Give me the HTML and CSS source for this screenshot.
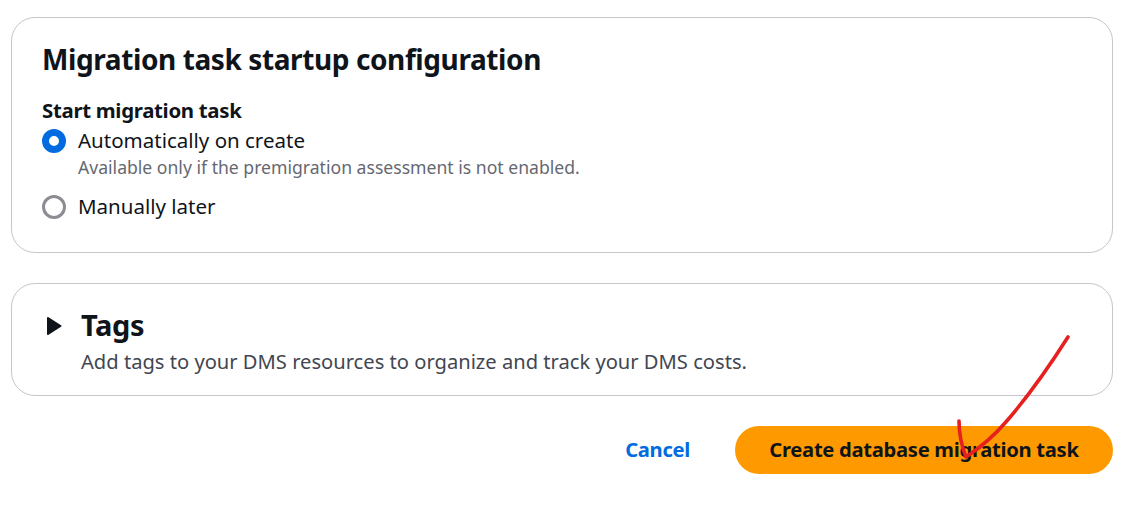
FILE: index.html
```html
<!DOCTYPE html>
<html lang="en">
<head>
<meta charset="utf-8">
<title>Create database migration task</title>
<link rel="stylesheet" href="styles.css">
</head>
<body>
<main class="page">
  <section class="card card-config">
    <h2 class="card-title">Migration task startup configuration</h2>
    <div class="field-label">Start migration task</div>
    <div class="radio-row radio-first">
      <span class="radio radio-on"></span>
      <div class="radio-text">
        <div class="radio-label">Automatically on create</div>
        <div class="radio-desc">Available only if the premigration assessment is not enabled.</div>
      </div>
    </div>
    <div class="radio-row radio-second">
      <span class="radio radio-off"></span>
      <div class="radio-text">
        <div class="radio-label">Manually later</div>
      </div>
    </div>
  </section>
  <section class="card card-tags">
    <svg class="caret" width="16" height="20" viewBox="0 0 16 20"><path d="M2 2 L14.5 10 L2 18 Z" fill="#0f141a" stroke="#0f141a" stroke-width="2" stroke-linejoin="round"/></svg>
    <div class="tags-text">
      <h2 class="tags-title">Tags</h2>
      <div class="tags-desc">Add tags to your DMS resources to organize and track your DMS costs.</div>
    </div>
  </section>
  <div class="actions">
    <a class="cancel">Cancel</a>
    <button class="primary">Create database migration task</button>
  </div>
</main>
<svg class="scribble" width="1136" height="517" viewBox="0 0 1136 517"><path d="M1068 337 C1047 370 1027 398 1005 423 C993 437 981 447 966 457 C962 447 959 433 959 421" fill="none" stroke="#e5201f" stroke-width="3.6" stroke-linecap="round" stroke-linejoin="round"/></svg>
</body>
</html>
```
FILE: styles.css
```css
* { box-sizing: border-box; }
html, body { margin: 0; background: #fff; }
body {
  width: 1136px;
  height: 517px;
  overflow: hidden;
  position: relative;
  font-family: "Noto Sans", "Open Sans", sans-serif;
  color: #0f141a;
}
.page { padding: 17px 23px 0 11px; }
.card {
  background: #fff;
  border: 1px solid #c6c6cd;
  border-radius: 24px;
}
.card-config { height: 236px; padding: 21px 30px 0; }
.card-title { margin: 0; font-size: 28px; line-height: 40px; font-weight: 700; letter-spacing: -0.4px; }
.field-label { margin-top: 18px; font-size: 20.4px; line-height: 26px; font-weight: 700; letter-spacing: -0.3px; }
.radio-row { display: flex; gap: 12px; }
.radio-first { margin-top: 3px; }
.radio-second { margin-top: 12px; }
.radio {
  flex: none;
  width: 24px;
  height: 24px;
  border-radius: 50%;
  margin-top: 3px;
}
.radio-on { border: 7px solid #006ce0; background: #fff; }
.radio-off { border: 3px solid #8c8c94; background: #fff; }
.radio-label { font-size: 20.5px; line-height: 28px; }
.radio-desc { font-size: 17.6px; line-height: 26px; color: #656871; }
.card-tags { margin-top: 30px; height: 113px; padding: 21px 30px 0; display: flex; gap: 19px; }
.caret { flex: none; margin: 11px 0 0 4px; }
.tags-title { margin: 0; font-size: 29px; line-height: 40px; font-weight: 700; letter-spacing: -0.4px; }
.tags-desc { margin-top: 2px; font-size: 20.15px; line-height: 28px; color: #424650; }
.actions { margin-top: 30px; display: flex; justify-content: flex-end; align-items: center; gap: 45px; }
.cancel { color: #006ce0; font-size: 20.2px; line-height: 26px; font-weight: 700; letter-spacing: -0.3px; margin-top: -2px; }
.primary {
  width: 378px;
  height: 48px;
  padding: 0 0 2px;
  border: 0;
  border-radius: 24px;
  background: #ff9900;
  color: #0f141a;
  font: 700 20.2px "Noto Sans", "Open Sans", sans-serif;
  letter-spacing: -0.3px;
}
.scribble { position: absolute; left: 0; top: 0; pointer-events: none; }
```
